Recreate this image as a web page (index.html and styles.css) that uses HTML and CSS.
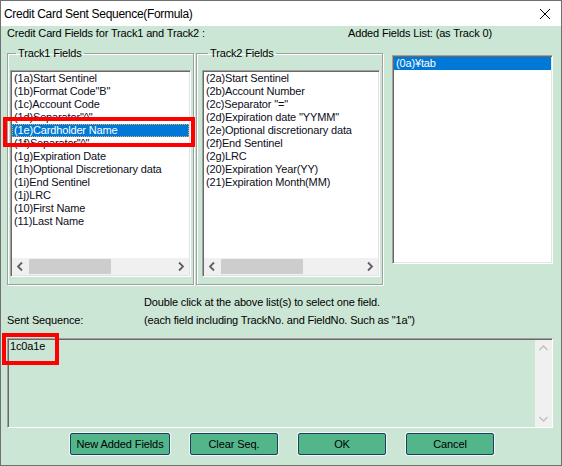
FILE: index.html
```html
<!DOCTYPE html>
<html>
<head>
<meta charset="utf-8">
<link rel="stylesheet" href="styles.css">
</head>
<body>
<div class="window">
  <div class="titlebar">
    <span class="title">Credit Card Sent Sequence(Formula)</span>
    <svg class="close" width="12" height="12" viewBox="0 0 12 12"><path d="M1 1 L11 11 M11 1 L1 11" stroke="#000" stroke-width="1" fill="none"/></svg>
  </div>
  <div class="client">
    <div class="header">
      <span class="h-left">Credit Card Fields for Track1 and Track2 :</span>
      <span>Added Fields List: (as Track 0)</span>
    </div>
    <div class="groups">
      <fieldset class="group g1">
        <legend>Track1 Fields</legend>
        <div class="listbox">
          <ul class="items">
            <li>(1a)Start Sentinel</li>
            <li>(1b)Format Code"B"</li>
            <li>(1c)Account Code</li>
            <li>(1d)Separator"^"</li>
            <li class="sel">(1e)Cardholder Name</li>
            <li>(1f)Separator"^"</li>
            <li>(1g)Expiration Date</li>
            <li>(1h)Optional Discretionary data</li>
            <li>(1i)End Sentinel</li>
            <li>(1j)LRC</li>
            <li>(10)First Name</li>
            <li>(11)Last Name</li>
          </ul>
          <div class="hscroll">
            <svg class="arrow" width="17" height="17" viewBox="0 0 17 17"><path d="M10 4.5 L6 8.5 L10 12.5" stroke="#606060" stroke-width="1.8" fill="none"/></svg>
            <div class="thumb"></div>
            <svg class="arrow end" width="17" height="17" viewBox="0 0 17 17"><path d="M7 4.5 L11 8.5 L7 12.5" stroke="#606060" stroke-width="1.8" fill="none"/></svg>
          </div>
        </div>
      </fieldset>
      <fieldset class="group g2">
        <legend>Track2 Fields</legend>
        <div class="listbox">
          <ul class="items">
            <li>(2a)Start Sentinel</li>
            <li>(2b)Account Number</li>
            <li>(2c)Separator "="</li>
            <li>(2d)Expiration date "YYMM"</li>
            <li>(2e)Optional discretionary data</li>
            <li>(2f)End Sentinel</li>
            <li>(2g)LRC</li>
            <li>(20)Expiration Year(YY)</li>
            <li>(21)Expiration Month(MM)</li>
          </ul>
          <div class="hscroll">
            <svg class="arrow" width="17" height="17" viewBox="0 0 17 17"><path d="M10 4.5 L6 8.5 L10 12.5" stroke="#606060" stroke-width="1.8" fill="none"/></svg>
            <div class="thumb"></div>
            <svg class="arrow end" width="17" height="17" viewBox="0 0 17 17"><path d="M7 4.5 L11 8.5 L7 12.5" stroke="#606060" stroke-width="1.8" fill="none"/></svg>
          </div>
        </div>
      </fieldset>
      <div class="listbox addlist">
        <ul class="items">
          <li class="sel nofocus">(0a)¥tab</li>
        </ul>
      </div>
    </div>
    <p class="hint">Double click at the above list(s) to select one field.</p>
    <div class="seq-row">
      <span>Sent Sequence:</span>
      <span>(each field including TrackNo. and FieldNo. Such as "1a")</span>
    </div>
    <div class="seqbox">
      <div class="seqtext">1c0a1e</div>
      <div class="vscroll">
        <svg width="17" height="17" viewBox="0 0 17 17"><path d="M4.5 10 L8.5 6 L12.5 10" stroke="#bfbfbf" stroke-width="1.4" fill="none"/></svg>
        <svg width="17" height="17" viewBox="0 0 17 17"><path d="M4.5 7 L8.5 11 L12.5 7" stroke="#bfbfbf" stroke-width="1.4" fill="none"/></svg>
      </div>
    </div>
    <div class="buttons">
      <button class="btn wide">New Added Fields</button>
      <button class="btn">Clear Seq.</button>
      <button class="btn">OK</button>
      <button class="btn">Cancel</button>
    </div>
  </div>
  <div class="mark m1"></div>
  <div class="mark m2"></div>
</div>
</body>
</html>
```

FILE: styles.css
```css
* { box-sizing: border-box; }
html, body { margin: 0; padding: 0; }
body {
  font-family: "Liberation Sans", Arial, sans-serif;
  font-size: 11px;
  letter-spacing: -0.15px;
  color: #000;
  background: #fff;
}
.window {
  position: relative;
  width: 562px;
  height: 466px;
  border: 1px solid #707070;
  background: #cbe6d5;
  display: flex;
  flex-direction: column;
}
.titlebar {
  height: 25px;
  flex: 0 0 25px;
  background: #fff;
  display: flex;
  align-items: center;
  padding-left: 3px;
}
.title {
  font-size: 12px;
  letter-spacing: -0.3px;
}
.close {
  margin-left: auto;
  margin-right: 10px;
}
.client {
  flex: 1;
  padding: 1px 0 0 6px;
  line-height: 13px;
}
.header {
  display: flex;
  height: 13px;
}
.h-left {
  flex: 0 0 341px;
}
.groups {
  display: flex;
  align-items: flex-start;
  margin-top: 6px;
}
.group {
  margin: 0;
  padding: 0 2px 7px 2px;
  width: 187px;
  min-width: 0;
  border: 1px solid #a0a0a0;
  box-shadow: inset 1px 1px 0 #fff, 1px 1px 0 #fff;
}
.group legend {
  margin-left: 6px;
  padding: 0 2px;
  line-height: 14px;
}
.g2 {
  margin-left: 2px;
  padding-left: 5px;
}
.listbox {
  background: #fff;
  border: 1px solid;
  border-color: #a0a0a0 #fff #fff #a0a0a0;
  box-shadow: inset 1px 1px 0 #696969, inset -1px -1px 0 #e3e3e3;
  padding: 1px;
  display: flex;
  flex-direction: column;
}
.group .listbox {
  margin-top: 10px;
  height: 207px;
}
.items {
  list-style: none;
  margin: 0;
  padding: 0;
  flex: 1;
}
.items li {
  height: 13px;
  line-height: 13px;
  padding-left: 2px;
  white-space: nowrap;
  color: #0d0d1a;
}
.items li.sel {
  background: #0078d7;
  color: #fff;
  outline: 1px dotted #d8b060;
  outline-offset: -1px;
}
.items li.sel.nofocus {
  outline: none;
}
.hscroll {
  height: 17px;
  flex: 0 0 17px;
  background: #f0f0f0;
  display: flex;
  align-items: stretch;
}
.arrow { flex: 0 0 17px; }
.arrow.end { margin-left: auto; }
.thumb {
  width: 82px;
  margin: 1px 0;
  background: #cdcdcd;
}
.addlist {
  margin-left: 9px;
  margin-top: 9px;
  width: 161px;
  height: 209px;
}
.hint {
  margin: 11px 0 0 137px;
  line-height: 13px;
}
.seq-row {
  margin-top: 5px;
  display: grid;
  grid-template-columns: 137px auto;
  height: 13px;
}
.seqbox {
  margin-top: 11px;
  width: 546px;
  height: 90px;
  border: 1px solid;
  border-color: #a0a0a0 #fff #fff #a0a0a0;
  box-shadow: inset 1px 1px 0 #696969;
  display: flex;
}
.seqtext {
  flex: 1;
  padding: 1px 0 0 2px;
}
.vscroll {
  width: 17px;
  margin: 1px 0 0 0;
  background: #f0f0f0;
  display: flex;
  flex-direction: column;
  justify-content: space-between;
}
.buttons {
  display: flex;
  gap: 20px;
  margin: 5px 0 0 63px;
}
.btn {
  width: 88px;
  height: 22px;
  padding: 0;
  font-family: "Liberation Sans", Arial, sans-serif;
  font-size: 11px;
  letter-spacing: -0.1px;
  color: #000;
  background: #52b68a;
  border: 1px solid #203f5e;
  border-radius: 2px;
  box-shadow: 0 0 0 1px #eef6f1;
}
.btn.wide { width: 100px; }
.mark {
  position: absolute;
  border: 4px solid #ff0000;
}
.m1 { left: 2px; top: 116px; width: 192px; height: 30px; }
.m2 { left: 1px; top: 332px; width: 57px; height: 32px; }
```
